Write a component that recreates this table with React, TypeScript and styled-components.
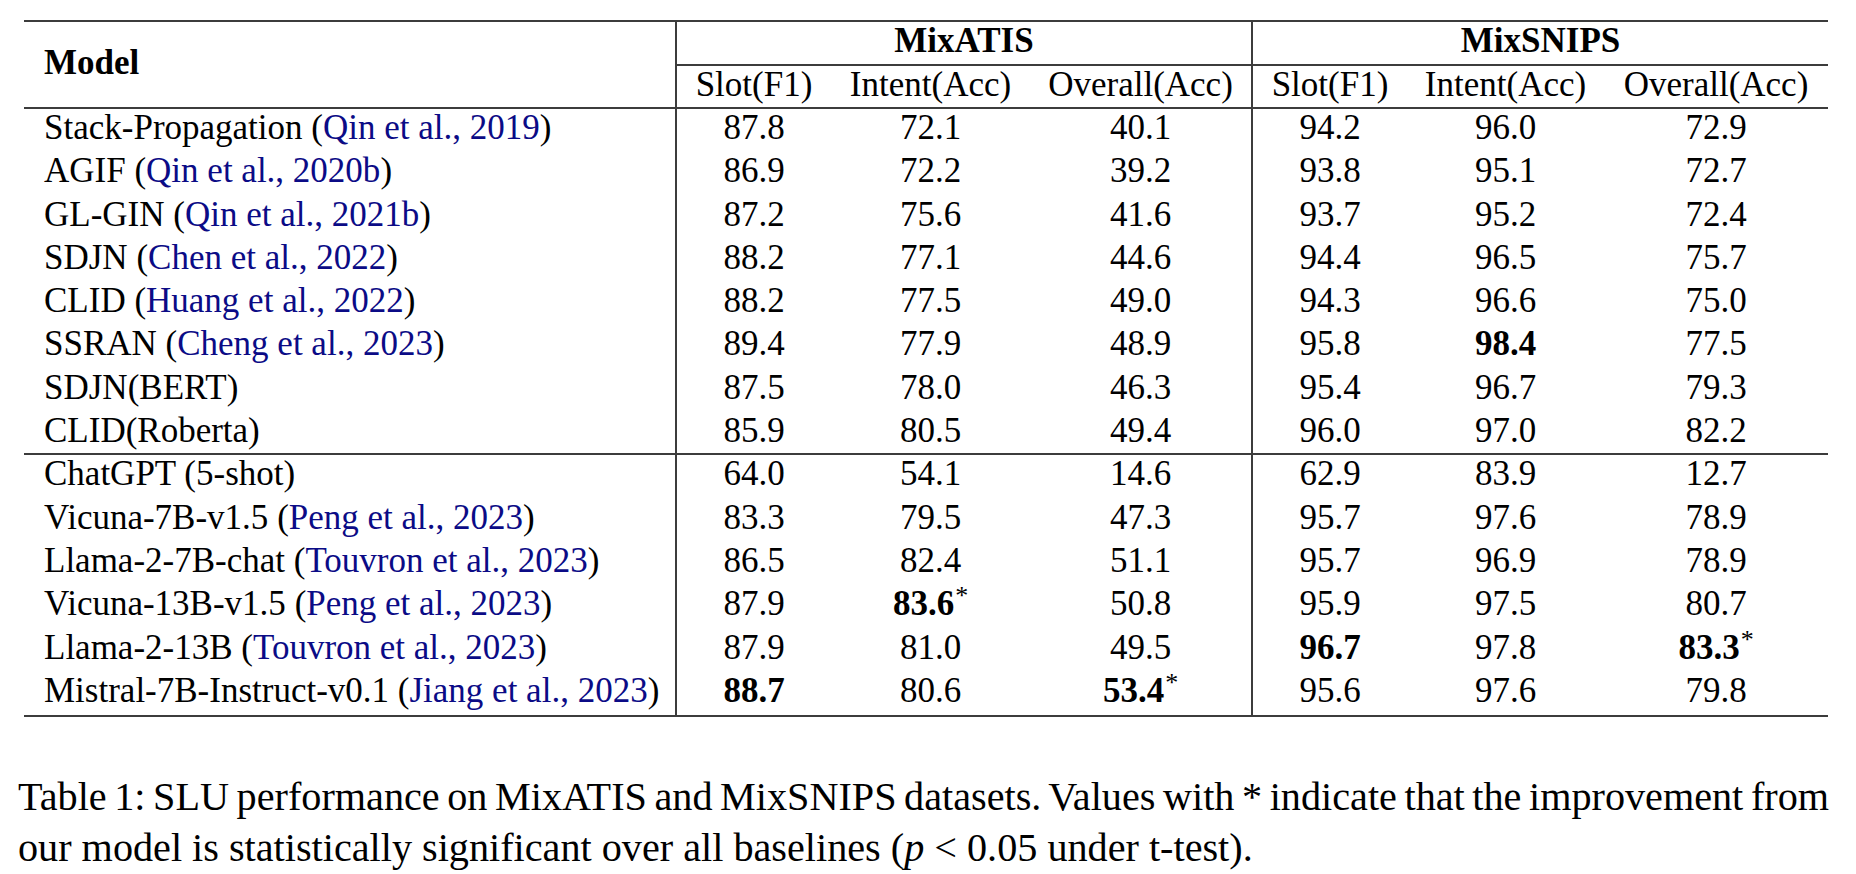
import React from "react";
import styled, { createGlobalStyle } from "styled-components";

const RULE = "#3c3c3c";
const CITE = "#0b0b86";

const GlobalStyle = createGlobalStyle`
  html, body {
    margin: 0;
    padding: 0;
    background: #ffffff;
  }
  body {
    font-family: "Liberation Serif", "Times New Roman", serif;
    color: #000;
  }
`;

const Page = styled.div`
  width: 1856px;
  height: 874px;
  box-sizing: border-box;
  padding: 20px 0 0 18px;
  overflow: hidden;
`;

const Table = styled.table`
  margin-left: 6px;
  width: 1804px;
  table-layout: fixed;
  border-collapse: separate;
  border-spacing: 0;
  border-top: 2px solid ${RULE};
  border-bottom: 2px solid ${RULE};
  font-size: 35px;
  line-height: 37.5px;
`;

const HeadRow = styled.tr<{ $h: number }>`
  height: ${(p) => p.$h}px;
`;

const BodyRow = styled.tr`
  height: 43.3px;
`;

const ModelHead = styled.th`
  text-align: left;
  font-weight: bold;
  padding: 0 0 4px 20px;
  vertical-align: middle;
  border-bottom: 2px solid ${RULE};
  white-space: nowrap;
`;

const GroupHead = styled.th`
  font-weight: bold;
  text-align: center;
  padding: 0;
  vertical-align: top;
  border-left: 2px solid ${RULE};
  border-bottom: 2px solid ${RULE};
  white-space: nowrap;
`;

const SubHead = styled.th<{ $divider?: boolean }>`
  font-weight: normal;
  text-align: center;
  padding: 0;
  vertical-align: top;
  border-bottom: 2px solid ${RULE};
  border-left: ${(p) => (p.$divider ? `2px solid ${RULE}` : "none")};
  white-space: nowrap;
`;

const NameCell = styled.td<{ $sep?: boolean }>`
  text-align: left;
  padding: 0 0 0 20px;
  vertical-align: top;
  white-space: nowrap;
  border-bottom: ${(p) => (p.$sep ? `2px solid ${RULE}` : "none")};
`;

const NumCell = styled.td<{ $divider?: boolean; $sep?: boolean }>`
  text-align: center;
  padding: 0;
  vertical-align: top;
  white-space: nowrap;
  border-left: ${(p) => (p.$divider ? `2px solid ${RULE}` : "none")};
  border-bottom: ${(p) => (p.$sep ? `2px solid ${RULE}` : "none")};
`;

const Cite = styled.span`
  color: ${CITE};
`;

const Strong = styled.b`
  font-weight: bold;
`;

const Star = styled.sup`
  font-size: 26px;
  line-height: 0;
  vertical-align: 11px;
  margin-left: 1px;
`;

const Caption = styled.div`
  width: 1811px;
  margin-top: 54px;
  font-size: 40.2px;
  line-height: 51px;
`;

const CaptionLine = styled.div<{ $justify?: boolean }>`
  white-space: nowrap;
  text-align: ${(p) => (p.$justify ? "justify" : "left")};
  text-align-last: ${(p) => (p.$justify ? "justify" : "auto")};
  word-spacing: ${(p) => (p.$justify ? "-3px" : "0")};
`;

const MathVar = styled.i`
  font-style: italic;
`;

type Row = { name: string; cite?: string; vals: string[] };

const group1: Row[] = [
  { name: "Stack-Propagation", cite: "Qin et al., 2019", vals: ["87.8", "72.1", "40.1", "94.2", "96.0", "72.9"] },
  { name: "AGIF", cite: "Qin et al., 2020b", vals: ["86.9", "72.2", "39.2", "93.8", "95.1", "72.7"] },
  { name: "GL-GIN", cite: "Qin et al., 2021b", vals: ["87.2", "75.6", "41.6", "93.7", "95.2", "72.4"] },
  { name: "SDJN", cite: "Chen et al., 2022", vals: ["88.2", "77.1", "44.6", "94.4", "96.5", "75.7"] },
  { name: "CLID", cite: "Huang et al., 2022", vals: ["88.2", "77.5", "49.0", "94.3", "96.6", "75.0"] },
  { name: "SSRAN", cite: "Cheng et al., 2023", vals: ["89.4", "77.9", "48.9", "95.8", "!98.4", "77.5"] },
  { name: "SDJN(BERT)", vals: ["87.5", "78.0", "46.3", "95.4", "96.7", "79.3"] },
  { name: "CLID(Roberta)", vals: ["85.9", "80.5", "49.4", "96.0", "97.0", "82.2"] },
];

const group2: Row[] = [
  { name: "ChatGPT (5-shot)", vals: ["64.0", "54.1", "14.6", "62.9", "83.9", "12.7"] },
  { name: "Vicuna-7B-v1.5", cite: "Peng et al., 2023", vals: ["83.3", "79.5", "47.3", "95.7", "97.6", "78.9"] },
  { name: "Llama-2-7B-chat", cite: "Touvron et al., 2023", vals: ["86.5", "82.4", "51.1", "95.7", "96.9", "78.9"] },
  { name: "Vicuna-13B-v1.5", cite: "Peng et al., 2023", vals: ["87.9", "!83.6*", "50.8", "95.9", "97.5", "80.7"] },
  { name: "Llama-2-13B", cite: "Touvron et al., 2023", vals: ["87.9", "81.0", "49.5", "!96.7", "97.8", "!83.3*"] },
  { name: "Mistral-7B-Instruct-v0.1", cite: "Jiang et al., 2023", vals: ["!88.7", "80.6", "!53.4*", "95.6", "97.6", "79.8"] },
];

const Value: React.FC<{ raw: string }> = ({ raw }) => {
  const bold = raw.startsWith("!");
  const star = raw.endsWith("*");
  const text = raw.replace(/^!/, "").replace(/\*$/, "");
  return (
    <>
      {bold ? <Strong>{text}</Strong> : text}
      {star && <Star>*</Star>}
    </>
  );
};

const DataRow: React.FC<{ row: Row; sep?: boolean }> = ({ row, sep }) => (
  <BodyRow>
    <NameCell $sep={sep}>
      {row.name}
      {row.cite && (
        <>
          {" ("}
          <Cite>{row.cite}</Cite>
          {")"}
        </>
      )}
    </NameCell>
    {row.vals.map((v, i) => (
      <NumCell key={i} $divider={i === 0 || i === 3} $sep={sep}>
        <Value raw={v} />
      </NumCell>
    ))}
  </BodyRow>
);

const subHeads = ["Slot(F1)", "Intent(Acc)", "Overall(Acc)"];
const colWidths = [651, 156, 199, 221, 156, 197, 224];

export default function App() {
  return (
    <>
      <GlobalStyle />
      <Page>
        <Table>
          <colgroup>
            {colWidths.map((w, i) => (
              <col key={i} style={{ width: w }} />
            ))}
          </colgroup>
          <thead>
            <HeadRow $h={44}>
              <ModelHead rowSpan={2}>Model</ModelHead>
              <GroupHead colSpan={3}>MixATIS</GroupHead>
              <GroupHead colSpan={3}>MixSNIPS</GroupHead>
            </HeadRow>
            <HeadRow $h={43}>
              {[...subHeads, ...subHeads].map((h, i) => (
                <SubHead key={i} $divider={i === 0 || i === 3}>
                  {h}
                </SubHead>
              ))}
            </HeadRow>
          </thead>
          <tbody>
            {group1.map((r, i) => (
              <DataRow key={r.name} row={r} sep={i === group1.length - 1} />
            ))}
            {group2.map((r) => (
              <DataRow key={r.name} row={r} />
            ))}
          </tbody>
        </Table>
        <Caption>
          <CaptionLine $justify>
            Table 1: SLU performance on MixATIS and MixSNIPS datasets. Values with * indicate that the improvement from
          </CaptionLine>
          <CaptionLine>
            our model is statistically significant over all baselines (<MathVar>p</MathVar> &lt; 0.05 under t-test).
          </CaptionLine>
        </Caption>
      </Page>
    </>
  );
}
